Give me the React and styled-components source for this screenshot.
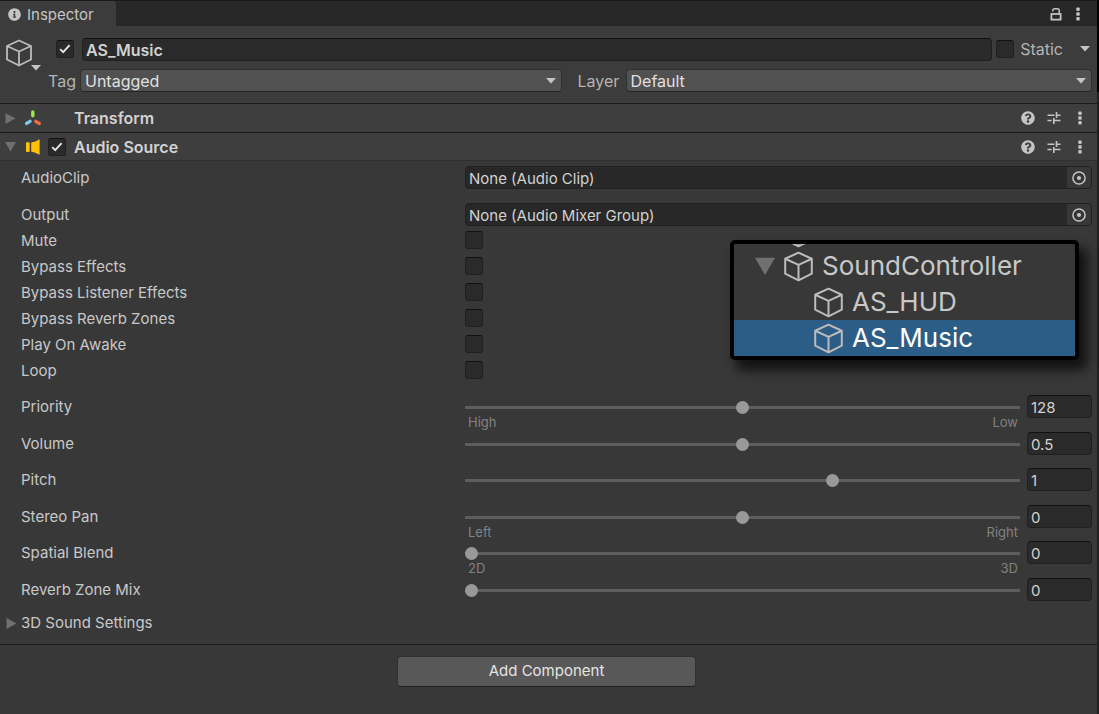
import React, { useState } from "react";
import styled, { createGlobalStyle, css } from "styled-components";
import { FaInfoCircle, FaQuestionCircle } from "react-icons/fa";

const GlobalStyle = createGlobalStyle`
  *, *::before, *::after { box-sizing: border-box; }
  body {
    margin: 0;
    background: #383838;
    color: #c8c8c8;
    font: 15px/20px Inter, "Liberation Sans", sans-serif;
  }
  button, input, select { font: inherit; color: inherit; margin: 0; }
  svg { display: block; flex: none; }
`;

const Window = styled.div`
  position: relative;
  display: flex;
  min-height: 100vh;
`;

const Panel = styled.main`
  flex: 1;
  min-width: 0;
  background: #383838;
`;

const WindowEdge = styled.div`
  width: 2px;
  background: linear-gradient(#000 92px, #202020 92px);
`;

const TabBar = styled.header`
  display: flex;
  align-items: center;
  height: 26px;
  padding-right: 11px;
  background: #282828;
  border-top: 1px solid #191919;
`;

const Tab = styled.button`
  display: flex;
  align-items: center;
  gap: 6px;
  height: 25px;
  width: 116px;
  padding: 2px 0 0 8px;
  margin-right: auto;
  border: 0;
  border-top-right-radius: 3px;
  background: #3c3c3c;
  color: #c4c4c4;
`;

const IconButton = styled.button`
  display: grid;
  place-items: center;
  width: ${(p) => p.$width || 26}px;
  height: 24px;
  padding: 0;
  border: 0;
  background: none;
  color: #c4c4c4;
`;

const StaticMenu = styled(IconButton)`
  margin-left: 11px;
`;

const ObjectHeader = styled.section`
  display: grid;
  grid-template-columns: 51px minmax(0, 1fr);
  padding: 11px 5px 11px 5px;
  font-size: 16px;
  background: #3c3c3c;
`;

const ObjectIcon = styled.button`
  position: relative;
  display: flex;
  align-items: flex-start;
  align-self: start;
  width: 36px;
  height: 34px;
  padding: 2px 0 0;
  border: 0;
  background: none;
`;

const CornerCaret = styled.span`
  position: absolute;
  right: 0;
  bottom: 0;
`;

const HeaderFields = styled.div`
  display: flex;
  flex-direction: column;
  gap: 8px;
`;

const NameRow = styled.div`
  display: flex;
  align-items: center;
  gap: 4px;
`;

const TagRow = styled.div`
  display: grid;
  grid-template-columns: 32px 481fr 64px 466fr;
  align-items: center;
  margin-left: -8px;
`;

const FieldLabel = styled.label`
  color: #b4b4b4;
  padding-left: ${(p) => p.$indent || 0}px;
`;

const fieldBox = css`
  height: 23px;
  border: 1px solid #202020;
  border-top-color: #111;
  border-radius: 4px;
  background: #2a2a2a;
  color: #d2d2d2;
  outline: 0;
`;

const NameInput = styled.input`
  ${fieldBox}
  flex: 1;
  min-width: 0;
  margin-left: 4px;
  padding: 1px 3px 0;
  font-weight: 600;
`;

const StaticLabel = styled.label`
  display: flex;
  align-items: center;
  gap: 6px;
  color: #b4b4b4;
`;

const Check = styled.input.attrs({ type: "checkbox" })`
  appearance: none;
  flex: none;
  width: 18px;
  height: 18px;
  border: 1px solid #202020;
  border-top-color: #111;
  border-radius: 3px;
  background: #2a2a2a;
`;

const CheckWrap = styled.span`
  display: grid;
  width: 18px;
  height: 18px;
  > * { grid-area: 1 / 1; }
  svg { pointer-events: none; place-self: center; }
`;

const SelectWrap = styled.div`
  display: grid;
  align-items: center;
  > * { grid-area: 1 / 1; }
  svg { justify-self: end; margin-right: 6px; pointer-events: none; }
`;

const Select = styled.select`
  appearance: none;
  width: 100%;
  height: 23px;
  padding: 0 4px;
  border: 1px solid #303030;
  border-bottom-color: #242424;
  border-radius: 4px;
  background: #515151;
  color: #e0e0e0;
  line-height: 20px;
`;

const ComponentBar = styled.header`
  display: flex;
  align-items: center;
  height: 29px;
  padding: 0 4px 0 5px;
  border-top: 1px solid #1a1a1a;
  border-bottom: ${(p) => (p.$open ? "1px solid #303030" : 0)};
  background: #3e3e3e;
`;

const Foldout = styled.button`
  display: grid;
  place-items: center;
  width: 10px;
  height: 20px;
  padding: 0;
  border: 0;
  background: none;
`;

const Glyph = styled.span`
  display: grid;
  place-items: center;
  width: 18px;
  margin: 0 6px 0 9px;
`;

const ComponentTitle = styled.h2`
  flex: 1;
  margin: 0;
  padding-left: 8px;
  font-size: 16px;
  font-weight: 600;
  line-height: 20px;
  color: #d2d2d2;
`;

const Properties = styled.div`
  padding: 5px 5px 0 21px;
`;

const PropertyRow = styled.div`
  display: grid;
  grid-template-columns: 444px minmax(0, 1fr);
  align-items: ${(p) => (p.$top ? "start" : "center")};
  height: ${(p) => p.$height}px;
`;

const SliderList = styled.div`
  padding-top: 12px;
  > :nth-child(odd) { height: 37px; }
  > :nth-child(even) { height: 36px; }
  > :last-child { height: 28px; }
`;

const PropertyLabel = styled.label`
  line-height: 23px;
`;

const ObjectField = styled.div`
  ${fieldBox}
  display: flex;
  border-color: #202020;
  background: #282828;
  overflow: hidden;
`;

const ObjectValue = styled.input`
  flex: 1;
  min-width: 0;
  padding: 2px 3px 0;
  border: 0;
  background: none;
  outline: 0;
`;

const PickerButton = styled.button`
  display: grid;
  place-items: center;
  width: 24px;
  padding: 0;
  border: 0;
  background: #373737;
  color: #c4c4c4;
`;

const SliderCell = styled.div`
  display: grid;
  grid-template-columns: minmax(0, 1fr) 65px;
  column-gap: 7px;
`;

const Range = styled.input.attrs({ type: "range" })`
  appearance: none;
  width: 100%;
  height: 23px;
  padding-top: 1px;
  background: none;
  &::-webkit-slider-runnable-track { height: 3px; background: #5e5e5e; }
  &::-webkit-slider-thumb {
    appearance: none;
    width: 13px;
    height: 13px;
    margin-top: -5px;
    border-radius: 50%;
    background: #999;
  }
`;

const NumberInput = styled.input`
  ${fieldBox}
  width: 100%;
  padding: 1px 3px 0;
`;

const RangeCaption = styled.div`
  display: flex;
  justify-content: space-between;
  margin-top: -2px;
  padding: 0 2px 0 3px;
  font-size: 13px;
  line-height: 13px;
  color: #828282;
`;

const SettingsFoldout = styled.button`
  display: flex;
  align-items: center;
  gap: 4px;
  height: 34px;
  padding: 0 6px;
  border: 0;
  background: none;
  color: #c8c8c8;
`;

const Footer = styled.footer`
  display: flex;
  justify-content: center;
  margin-top: 4px;
  padding: 11px 4px 0 0;
  border-top: 1px solid #1a1a1a;
`;

const AddButton = styled.button`
  width: 299px;
  height: 31px;
  padding: 0 0 2px;
  border: 1px solid #303030;
  border-bottom-color: #222;
  border-radius: 4px;
  background: #585858;
  color: #e4e4e4;
`;

const Hierarchy = styled.aside`
  position: absolute;
  top: 240px;
  right: 20px;
  width: 349px;
  height: 120px;
  display: flex;
  flex-direction: column;
  justify-content: flex-end;
  overflow: hidden;
  border: 4px solid #000;
  border-radius: 5px;
  background: #383838;
  box-shadow: 7px 9px 12px 1px rgba(0, 0, 0, 0.7);
`;

const TreeRow = styled.div`
  display: flex;
  flex: none;
  align-items: center;
  gap: 8px;
  height: 36px;
  padding-left: ${(p) => (p.$child ? 79 : 21)}px;
  background: ${(p) => (p.$selected ? "#2c5d87" : "transparent")};
  color: ${(p) => (p.$selected ? "#fff" : "#c8c8c8")};
  font-size: 26px;
  line-height: 36px;
`;

const PeekRow = styled(TreeRow)`
  align-items: flex-end;
  padding-left: 49px;
`;

const Cube = ({ size = 28, stroke = 1.8 }) => (
  <svg width={size} height={size} viewBox="0 0 28 28" fill="none" stroke="#bcbcbc" strokeWidth={stroke} strokeLinejoin="round">
    <path d="M14 1.5 26 7v13.5L14 26.5 2 20.5V7z" />
    <path d="M2 7 14 12.5 26 7M14 12.5v14" />
  </svg>
);

const Caret = () => (
  <svg width="10" height="6" viewBox="0 0 10 6"><path d="M0 0h10L5 5.5z" fill="#c4c4c4" /></svg>
);

const Triangle = ({ open, size = 11 }) => (
  <svg width={size} height={size} viewBox="0 0 11 11">
    <path d={open ? "M0 1h11L5.5 10.5z" : "M.5 0v11L10.5 5.5z"} fill="#707070" />
  </svg>
);

const Dots = () => (
  <svg width="4" height="14" viewBox="0 0 4 14" fill="#c4c4c4">
    <rect x=".3" y=".5" width="3.4" height="3.4" rx=".8" />
    <rect x=".3" y="5.3" width="3.4" height="3.4" rx=".8" />
    <rect x=".3" y="10.1" width="3.4" height="3.4" rx=".8" />
  </svg>
);

const Presets = () => (
  <svg width="14" height="14" viewBox="0 0 14 14" fill="none" stroke="#c4c4c4" strokeWidth="1.6">
    <path d="M.5 4.3h7M9.3 4.3H13.5M9.5 1v6M.5 9.5h4.2M6.5 9.5h7M6.8 7v6" />
  </svg>
);

const Lock = () => (
  <svg width="12" height="14" viewBox="0 0 12 14" fill="none" stroke="#c4c4c4" strokeWidth="1.8">
    <rect x="1.4" y="7" width="9.2" height="5.6" />
    <path d="M9.2 7V3.6a1.8 1.8 0 0 0-1.8-1.8H4.6a1.8 1.8 0 0 0-1.8 1.8v.8" strokeWidth="1.5" />
  </svg>
);

const Picker = () => (
  <svg width="14" height="14" viewBox="0 0 14 14">
    <circle cx="7" cy="7" r="6.1" fill="none" stroke="#c4c4c4" strokeWidth="1.5" />
    <circle cx="7" cy="7" r="2.1" fill="#c4c4c4" />
  </svg>
);

const TransformGlyph = () => (
  <svg width="18" height="16" viewBox="0 0 18 16" fill="none" strokeWidth="3.4" strokeLinecap="round">
    <path d="M8.8 2v3.8" stroke="#a0e650" />
    <path d="M6 11.4 2.6 13.4" stroke="#74cdf2" />
    <path d="M11.8 11.4 15.3 13.4" stroke="#f26a41" />
  </svg>
);

const SpeakerGlyph = () => (
  <svg width="14" height="16" viewBox="0 0 14 16" fill="#ffc107">
    <rect x="0" y="3.2" width="3.7" height="9.8" rx="1" />
    <path d="M5.2 4.2a1 1 0 0 1 .8-1C8.800 2.900 11 1.800 12.800.4c.4-.2.8 0 .8.400v14.400c0 .4-.4.600-.8.400C11 14.200 8.800 13.200 6 12.900a1 1 0 0 1-.8-1z" />
  </svg>
);

const Tick = () => (
  <svg width="12" height="10" viewBox="0 0 12 10" fill="none" stroke="#e4e4e4" strokeWidth="1.9">
    <path d="M1.2 5.2 4.2 8.2 10.6 1.2" />
  </svg>
);

function Toggle({ id, label, initial = false }) {
  const [on, setOn] = useState(initial);
  return (
    <CheckWrap>
      <Check id={id} aria-label={label} checked={on} onChange={(e) => setOn(e.target.checked)} />
      {on && <Tick />}
    </CheckWrap>
  );
}

function Dropdown({ id, value }) {
  return (
    <SelectWrap>
      <Select id={id} defaultValue={value}><option>{value}</option></Select>
      <Caret />
    </SelectWrap>
  );
}

function ComponentHeader({ title, open, glyph, children }) {
  return (
    <ComponentBar $open={open}>
      <Foldout aria-label={`Fold ${title}`} aria-expanded={!!open}><Triangle open={open} /></Foldout>
      <Glyph>{glyph}</Glyph>
      {children}
      <ComponentTitle>{title}</ComponentTitle>
      <IconButton aria-label="Help"><FaQuestionCircle size={14} /></IconButton>
      <IconButton aria-label="Presets"><Presets /></IconButton>
      <IconButton aria-label="More"><Dots /></IconButton>
    </ComponentBar>
  );
}

const TogglePlaceholder = styled.span`
  width: 18px;
`;

function ObjectRow({ id, label, value, height }) {
  return (
    <PropertyRow $top $height={height}>
      <PropertyLabel htmlFor={id}>{label}</PropertyLabel>
      <ObjectField>
        <ObjectValue id={id} readOnly value={value} />
        <PickerButton aria-label={`Select ${label}`}><Picker /></PickerButton>
      </ObjectField>
    </PropertyRow>
  );
}

function SliderRow({ label, min, max, initial, step, ends }) {
  const [value, setValue] = useState(initial);
  const id = label.toLowerCase().replace(/ /g, "-");
  const update = (e) => setValue(e.target.value);
  return (
    <PropertyRow $top>
      <PropertyLabel htmlFor={id}>{label}</PropertyLabel>
      <SliderCell>
        <Range id={id} min={min} max={max} step={step} value={value} onChange={update} />
        <NumberInput aria-label={`${label} value`} value={value} onChange={update} />
        {ends && <RangeCaption><span>{ends[0]}</span><span>{ends[1]}</span></RangeCaption>}
      </SliderCell>
    </PropertyRow>
  );
}

const toggles = ["Mute", "Bypass Effects", "Bypass Listener Effects", "Bypass Reverb Zones", "Play On Awake", "Loop"];

const sliders = [
  { label: "Priority", min: 0, max: 256, step: 1, initial: 128, ends: ["High", "Low"] },
  { label: "Volume", min: 0, max: 1, step: 0.01, initial: 0.5 },
  { label: "Pitch", min: -3, max: 3, step: 0.01, initial: 1 },
  { label: "Stereo Pan", min: -1, max: 1, step: 0.01, initial: 0, ends: ["Left", "Right"] },
  { label: "Spatial Blend", min: 0, max: 1, step: 0.01, initial: 0, ends: ["2D", "3D"] },
  { label: "Reverb Zone Mix", min: 0, max: 1, step: 0.01, initial: 0 },
];

export default function App() {
  return (
    <Window>
      <GlobalStyle />
      <Panel>
        <TabBar>
          <Tab><FaInfoCircle size={13} />Inspector</Tab>
          <IconButton $width={28} aria-label="Lock"><Lock /></IconButton>
          <IconButton $width={16} aria-label="Tab menu"><Dots /></IconButton>
        </TabBar>

        <ObjectHeader>
          <ObjectIcon aria-label="Object icon">
            <Cube />
            <CornerCaret><Caret /></CornerCaret>
          </ObjectIcon>
          <HeaderFields>
            <NameRow>
              <Toggle label="Active" initial />
              <NameInput aria-label="Name" defaultValue="AS_Music" />
              <StaticLabel><Toggle />Static</StaticLabel>
              <StaticMenu $width={14} aria-label="Static options"><Caret /></StaticMenu>
            </NameRow>
            <TagRow>
              <FieldLabel htmlFor="tag">Tag</FieldLabel>
              <Dropdown id="tag" value="Untagged" />
              <FieldLabel htmlFor="layer" $indent={16}>Layer</FieldLabel>
              <Dropdown id="layer" value="Default" />
            </TagRow>
          </HeaderFields>
        </ObjectHeader>

        <ComponentHeader title="Transform" glyph={<TransformGlyph />}><TogglePlaceholder /></ComponentHeader>
        <ComponentHeader title="Audio Source" open glyph={<SpeakerGlyph />}>
          <Toggle label="Audio Source enabled" initial />
        </ComponentHeader>

        <Properties>
          <ObjectRow id="clip" label="AudioClip" value="None (Audio Clip)" height={37} />
          <ObjectRow id="output" label="Output" value="None (Audio Mixer Group)" height={24} />
          <div>
            {toggles.map((label) => (
              <PropertyRow key={label} $height={26}>
                <PropertyLabel htmlFor={label}>{label}</PropertyLabel>
                <Toggle id={label} />
              </PropertyRow>
            ))}
          </div>
          <SliderList>
            {sliders.map((s) => <SliderRow key={s.label} {...s} />)}
          </SliderList>
        </Properties>

        <SettingsFoldout aria-expanded="false"><Triangle />3D Sound Settings</SettingsFoldout>
        <Footer><AddButton>Add Component</AddButton></Footer>
      </Panel>
      <WindowEdge />

      <Hierarchy aria-label="Hierarchy">
        <PeekRow><Cube size={31} /></PeekRow>
        <TreeRow><Triangle open size={20} /><Cube size={31} />SoundController</TreeRow>
        <TreeRow $child><Cube size={31} />AS_HUD</TreeRow>
        <TreeRow $child $selected><Cube size={31} />AS_Music</TreeRow>
      </Hierarchy>
    </Window>
  );
}
